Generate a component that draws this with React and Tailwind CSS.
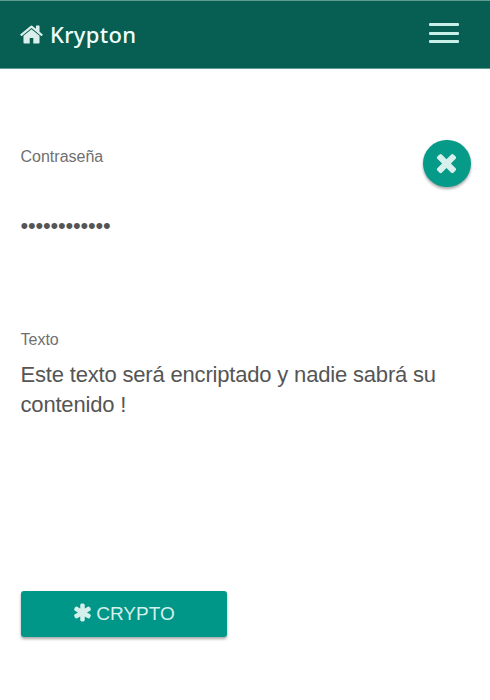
import React, { useState } from "react";

const HomeIcon = ({ className }) => (
  <svg className={className} viewBox="0 0 1792 1792" fill="currentColor" xmlns="http://www.w3.org/2000/svg">
    <path d="M1472 992v480q0 26-19 45t-45 19h-384v-384h-256v384h-384q-26 0-45-19t-19-45v-480q0-1 .5-3t.5-3l575-474 575 474q1 2 1 6zm223-69l-62 74q-8 9-21 11h-3q-13 0-21-7l-692-577-692 577q-12 8-24 7-13-2-21-11l-62-74q-8-10-7-23.5t11-21.5l719-599q32-26 76-26t76 26l244 204v-195q0-14 9-23t23-9h192q14 0 23 9t9 23v408l219 182q10 8 11 21.5t-7 23.5z" />
  </svg>
);

const TimesIcon = ({ className }) => (
  <svg className={className} viewBox="0 0 1792 1792" fill="currentColor" xmlns="http://www.w3.org/2000/svg">
    <path d="M1490 1322q0 40-28 68l-136 136q-28 28-68 28t-68-28l-294-294-294 294q-28 28-68 28t-68-28l-136-136q-28-28-28-68t28-68l294-294-294-294q-28-28-28-68t28-68l136-136q28-28 68-28t68 28l294 294 294-294q28-28 68-28t68 28l136 136q28 28 28 68t-28 68l-294 294 294 294q28 28 28 68z" />
  </svg>
);

const AsteriskIcon = ({ className }) => (
  <svg className={className} viewBox="0 0 1792 1792" fill="currentColor" xmlns="http://www.w3.org/2000/svg">
    <path d="M1546 1050q46 26 59.5 77.5t-12.5 97.5l-64 110q-26 46-77.5 59.5t-97.5-12.5l-266-153v307q0 52-38 90t-90 38h-128q-52 0-90-38t-38-90v-307l-266 153q-46 26-97.5 12.5t-77.5-59.5l-64-110q-26-46-12.5-97.5t59.5-77.5l266-154-266-154q-46-26-59.5-77.5t12.5-97.5l64-110q26-46 77.5-59.5t97.5 12.5l266 153v-307q0-52 38-90t90-38h128q52 0 90 38t38 90v307l266-153q46-26 97.5-12.5t77.5 59.5l64 110q26 46 12.5 97.5t-59.5 77.5l-266 154z" />
  </svg>
);

const App = () => {
  const [password, setPassword] = useState("contrasena12");
  const [text, setText] = useState("Este texto será encriptado y nadie sabrá su contenido !");

  const clear = () => {
    setPassword("");
    setText("");
  };

  return (
    <div className="min-h-screen bg-white font-['Liberation_Sans',Arial,sans-serif] text-[#555555]">
      {/* Navbar */}
      <nav className="flex h-[69px] items-center justify-between border-t border-b border-t-[#5f9c92] border-b-[#5f9c92] bg-[#075e52] pr-[31px] pb-[3px] pl-[19px]">
        <a href="#" className="flex items-center text-[#dceeeb]">
          <HomeIcon className="mt-0.5 h-[25px] w-[25px]" />
          <span className="mt-0.5 ml-[6px] font-['Noto_Sans',sans-serif] text-[22px] leading-[30px] font-medium tracking-[0.3px] text-[#f0fffc]">
            Krypton
          </span>
        </a>
        <button className="flex h-5 w-[30px] flex-col justify-between" aria-label="Menu">
          <span className="h-[3px] w-full rounded-[1px] bg-[#c9efe9]"></span>
          <span className="h-[3px] w-full rounded-[1px] bg-[#c9efe9]"></span>
          <span className="h-[3px] w-full rounded-[1px] bg-[#c9efe9]"></span>
        </button>
      </nav>

      <main className="pt-[71px] pr-[19px] pl-[20.5px]">
        {/* Password */}
        <div className="flex items-start justify-between">
          <div className="pt-[7px]">
            <label htmlFor="password" className="block text-base leading-5 text-[#707070]">
              Contraseña
            </label>
            <input
              id="password"
              type="password"
              value={password}
              onChange={(e) => setPassword(e.target.value)}
              className="mt-[42px] block h-[34px] w-[300px] text-[22px] tracking-[-0.2px] outline-none"
            />
          </div>
          <button
            onClick={clear}
            className="flex h-[47px] w-12 items-center justify-center rounded-full bg-[#069a88] text-[#d8f0ec] shadow-[0_2px_3px_rgba(0,0,0,0.35)]"
            aria-label="Borrar"
          >
            <TimesIcon className="-mt-[3px] mr-px h-[29px] w-[29px]" />
          </button>
        </div>

        {/* Text */}
        <label htmlFor="text" className="mt-[87px] block text-base leading-5 text-[#707070]">
          Texto
        </label>
        <textarea
          id="text"
          value={text}
          onChange={(e) => setText(e.target.value)}
          className="mt-[10px] block h-[180px] w-full resize-none text-[22px] leading-[30px] tracking-[-0.18px] outline-none"
        />

        <button className="mt-[50.5px] flex h-[46px] w-[206px] items-center justify-center rounded-[3px] bg-[#009788] text-[#d5f0ec] shadow-[0_2px_3px_rgba(0,0,0,0.35)]">
          <AsteriskIcon className="-mt-0.5 h-[21px] w-[21px]" />
          <span className="ml-[3px] text-[19px] leading-6">CRYPTO</span>
        </button>
      </main>
    </div>
  );
};

export default App;
